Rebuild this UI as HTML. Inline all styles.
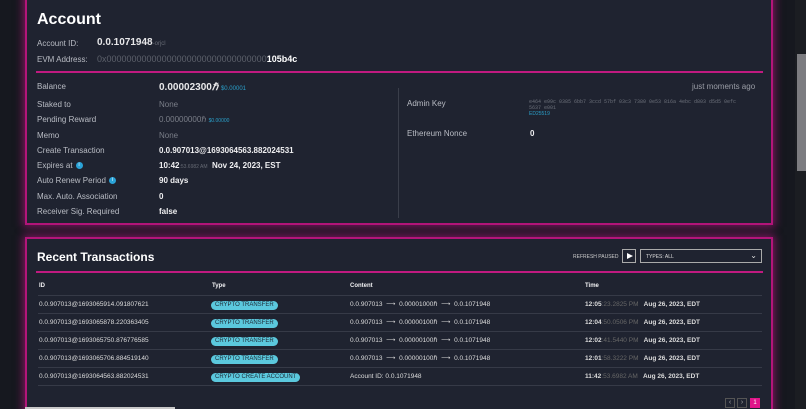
<!DOCTYPE html>
<html style="width:806px;height:409px;overflow:hidden"><head><meta charset="utf-8"><style>
*{box-sizing:border-box;margin:0;padding:0}
body{width:806px;height:409px;overflow:hidden;background:#16181f;font-family:"Liberation Sans",sans-serif;color:#e8e8ea;position:relative}
.card{position:absolute;left:25px;width:748px;background:#1f2330;border:2px solid #b3157a;box-shadow:0 0 8px 2px rgba(200,20,140,.55)}
.c1{top:-10px;height:235px}
.c2{top:237px;height:185px}
.abs{position:absolute;white-space:nowrap}
.lbl{color:#b9bcc4;font-size:8px}
.val{color:#f0f0f2;font-size:8px;font-weight:bold}
.dim{color:#7a7e88;font-size:8px}
.line{position:absolute;height:2px;background:#c01a80}
.pill{position:absolute;background:#5bc8dd;color:#1e2a36;font-size:6px;border-radius:5px;padding:0 4px;height:9px;line-height:9px}
.row{position:absolute;left:11px;width:724px;height:1px;background:#363a47}
.info{display:inline-block;width:7px;height:7px;border-radius:50%;background:#2aa3d8;color:#fff;font-size:5px;text-align:center;line-height:7px;vertical-align:middle;margin-left:3px}
</style></head><body>
<div class="card c1">
 <div class="abs" style="left:10px;top:19px;font-size:16px;font-weight:bold;color:#fff">Account</div>
 <div class="abs lbl" style="left:10px;top:47px">Account ID:</div>
 <div class="abs" style="left:70px;top:45px;font-size:10px;font-weight:bold">0.0.1071948<span style="color:#666a74;font-size:6px;font-weight:normal">-orjcl</span></div>
 <div class="abs lbl" style="left:10px;top:63px">EVM Address:</div>
 <div class="abs" style="left:70px;top:62px;font-size:9px;color:#5d616b">0x00000000000000000000000000000000<b style="color:#fff">105b4c</b></div>
 <div class="line" style="left:9px;top:79px;width:727px"></div>
 <div class="abs lbl" style="left:10px;top:90px">Balance</div>
 <div class="abs" style="left:132px;top:90px;font-size:10px;font-weight:bold">0.00002300<i>ℏ</i> <span style="color:#2a9fc9;font-size:6px;font-weight:normal">$0.00001</span></div>
 <div class="abs lbl" style="left:665px;top:90px;font-size:8px;color:#9a9da6">just moments ago</div>
 <div class="abs lbl" style="left:10px;top:108px">Staked to</div><div class="abs dim" style="left:132px;top:108px">None</div>
 <div class="abs lbl" style="left:10px;top:123px">Pending Reward</div><div class="abs dim" style="left:132px;top:123px">0.00000000ℏ <span style="color:#2a9fc9;font-size:5px">$0.00000</span></div>
 <div class="abs lbl" style="left:10px;top:139px">Memo</div><div class="abs dim" style="left:132px;top:139px">None</div>
 <div class="abs lbl" style="left:10px;top:154px">Create Transaction</div><div class="abs val" style="left:132px;top:154px">0.0.907013@1693064563.882024531</div>
 <div class="abs lbl" style="left:10px;top:169px">Expires at<span class="info">i</span></div><div class="abs val" style="left:132px;top:169px">10:42<span style="color:#666a74;font-size:5px;font-weight:normal">:53.6982 AM</span>&nbsp; Nov 24, 2023, EST</div>
 <div class="abs lbl" style="left:10px;top:184px">Auto Renew Period<span class="info">i</span></div><div class="abs val" style="left:132px;top:184px">90 days</div>
 <div class="abs lbl" style="left:10px;top:200px">Max. Auto. Association</div><div class="abs val" style="left:132px;top:200px">0</div>
 <div class="abs lbl" style="left:10px;top:215px">Receiver Sig. Required</div><div class="abs val" style="left:132px;top:215px">false</div>
 <div class="abs" style="left:371px;top:96px;width:1px;height:130px;background:#3a3e4a"></div>
 <div class="abs lbl" style="left:380px;top:107px">Admin Key</div>
 <div class="abs" style="left:502px;top:107px;font-family:'Liberation Mono',monospace;font-size:5px;color:#6c707a;line-height:6px">e464 e99c 0385 6bb7 3ccd 57bf 03c3 7380 0e53 816a 4ebc d803 d5d5 0efc<br>5637 e001<br><span style="color:#2a9fc9;font-family:'Liberation Sans'">ED25519</span></div>
 <div class="abs lbl" style="left:380px;top:137px">Ethereum Nonce</div><div class="abs val" style="left:503px;top:137px">0</div>
</div>
<div class="card c2">
 <div class="abs" style="left:10px;top:11px;font-size:12px;font-weight:bold;color:#fff">Recent Transactions</div>
 <div class="abs" style="left:546px;top:15px;font-size:5px;color:#ccc">REFRESH PAUSED</div>
 <div class="abs" style="left:595px;top:10px;width:14px;height:14px;border:1px solid #aaa"><div style="margin:3px 0 0 4px;width:0;height:0;border-left:6px solid #fff;border-top:3.5px solid transparent;border-bottom:3.5px solid transparent"></div></div>
 <div class="abs" style="left:613px;top:10px;width:122px;height:14px;border:1px solid #aaa;font-size:5px;padding:4px 0 0 5px;color:#ddd">TYPES: ALL<span style="position:absolute;right:4px;top:1px;font-size:8px">⌄</span></div>
 <div class="line" style="left:9px;top:32px;width:727px"></div>
 <div class="abs val" style="left:12px;top:44px;font-size:6px">ID</div>
 <div class="abs val" style="left:185px;top:44px;font-size:6px">Type</div>
 <div class="abs val" style="left:323px;top:44px;font-size:6px">Content</div>
 <div class="abs val" style="left:558px;top:44px;font-size:6px">Time</div>
 <div class="row" style="top:56px"></div><div class="row" style="top:74px"></div><div class="row" style="top:92px"></div><div class="row" style="top:110px"></div><div class="row" style="top:128px"></div><div class="row" style="top:146px"></div>
</div>
<div class="abs" style="left:39px;top:296px;font-size:6.5px;color:#ddd;line-height:18px">0.0.907013@1693065914.091807621<br>0.0.907013@1693065878.220363405<br>0.0.907013@1693065750.876776585<br>0.0.907013@1693065706.884519140<br>0.0.907013@1693064563.882024531</div>
<div class="pill" style="left:211px;top:301px">CRYPTO TRANSFER</div>
<div class="pill" style="left:211px;top:319px">CRYPTO TRANSFER</div>
<div class="pill" style="left:211px;top:337px">CRYPTO TRANSFER</div>
<div class="pill" style="left:211px;top:355px">CRYPTO TRANSFER</div>
<div class="pill" style="left:211px;top:373px">CRYPTO CREATE ACCOUNT</div>
<div class="abs" style="left:350px;top:296px;font-size:6.5px;color:#ddd;line-height:18px">0.0.907013 &nbsp;⟶&nbsp; 0.00001000ℏ &nbsp;⟶&nbsp; 0.0.1071948<br>0.0.907013 &nbsp;⟶&nbsp; 0.00000100ℏ &nbsp;⟶&nbsp; 0.0.1071948<br>0.0.907013 &nbsp;⟶&nbsp; 0.00000100ℏ &nbsp;⟶&nbsp; 0.0.1071948<br>0.0.907013 &nbsp;⟶&nbsp; 0.00000100ℏ &nbsp;⟶&nbsp; 0.0.1071948<br>Account ID: 0.0.1071948</div>
<div class="abs" style="left:585px;top:296px;font-size:6.5px;color:#ddd;line-height:18px;font-weight:bold">12:05<span style="color:#666;font-weight:normal">:23.2825 PM</span> &nbsp; Aug 26, 2023, EDT<br>12:04<span style="color:#666;font-weight:normal">:50.0506 PM</span> &nbsp; Aug 26, 2023, EDT<br>12:02<span style="color:#666;font-weight:normal">:41.5440 PM</span> &nbsp; Aug 26, 2023, EDT<br>12:01<span style="color:#666;font-weight:normal">:58.3222 PM</span> &nbsp; Aug 26, 2023, EDT<br>11:42<span style="color:#666;font-weight:normal">:53.6982 AM</span> &nbsp; Aug 26, 2023, EDT</div>
<div class="abs" style="left:725px;top:398px;width:10px;height:10px;border:1px solid #555;font-size:7px;color:#aaa;text-align:center;line-height:8px">‹</div>
<div class="abs" style="left:737px;top:398px;width:10px;height:10px;border:1px solid #555;font-size:7px;color:#aaa;text-align:center;line-height:8px">›</div>
<div class="abs" style="left:750px;top:398px;width:10px;height:10px;background:#e0168a;font-size:6px;color:#fff;text-align:center;line-height:10px">1</div>
<div class="abs" style="left:795px;top:0;width:11px;height:409px;background:#1b1d22"></div>
<div class="abs" style="left:797px;top:54px;width:9px;height:117px;background:#7c7c80"></div>
<div class="abs" style="left:25px;top:407px;width:150px;height:2px;background:#c8c8c8"></div>
</body></html>
